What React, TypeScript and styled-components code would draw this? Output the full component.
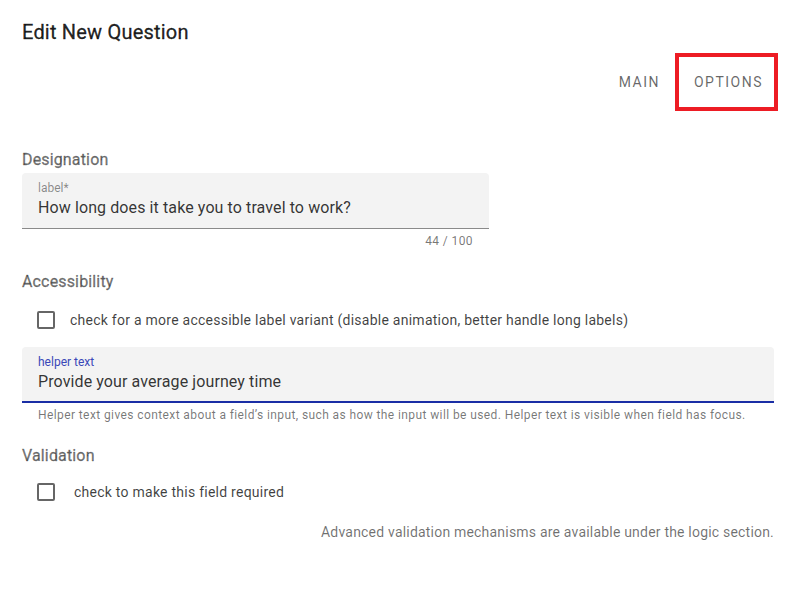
import React from "react";
import styled, { createGlobalStyle } from "styled-components";

const Global = createGlobalStyle`
  html, body { margin: 0; padding: 0; background: #fff; }
  body { font-family: Roboto, "Liberation Sans", Arial, sans-serif; }
  * { box-sizing: border-box; }
`;

const Page = styled.div`
  width: 797px;
  height: 615px;
  padding: 16px 23px 0 22px;
  display: flex;
  flex-direction: column;
`;

const Title = styled.h1`
  margin: 0;
  font-size: 20px;
  font-weight: 400;
  line-height: 32px;
  color: rgba(0, 0, 0, 0.87);
  letter-spacing: 0.2px;
  -webkit-text-stroke: 0.3px rgba(0, 0, 0, 0.87);
`;

const Tabs = styled.div`
  display: flex;
  justify-content: flex-end;
  margin-top: 5px;
  margin-right: -4px;
`;

const Tab = styled.div<{ $outlined?: boolean }>`
  height: 58px;
  padding: 0 11px 0 ${(p) => (p.$outlined ? 15 : 13)}px;
  display: flex;
  align-items: center;
  justify-content: center;
  font-size: 14px;
  font-weight: 400;
  letter-spacing: 1.5px;
  text-transform: uppercase;
  color: rgba(0, 0, 0, 0.6);
  border: 4px solid ${(p) => (p.$outlined ? "#ed1c24" : "transparent")};
`;

const Section = styled.h2<{ $top: number }>`
  margin: ${(p) => p.$top}px 0 1px;
  font-size: 16px;
  font-weight: 400;
  line-height: 24px;
  letter-spacing: 0.15px;
  color: rgba(0, 0, 0, 0.54);
  -webkit-text-stroke: 0.35px rgba(0, 0, 0, 0.54);
`;

const Field = styled.div<{ $width?: string; $focused?: boolean }>`
  width: ${(p) => p.$width || "100%"};
  height: 56px;
  background: #f3f3f3;
  border-radius: 4px 4px 0 0;
  border-bottom: ${(p) => (p.$focused ? "2px solid #1a2ea5" : "1px solid #8a8a8a")};
  padding: 8px 16px 0;
  display: flex;
  flex-direction: column;
`;

const FieldLabel = styled.span<{ $focused?: boolean }>`
  font-size: 12px;
  line-height: 14px;
  color: ${(p) => (p.$focused ? "#3a48b8" : "rgba(0,0,0,0.45)")};
`;

const FieldValue = styled.span`
  margin-top: 1px;
  font-size: 16px;
  line-height: 24px;
  color: rgba(0, 0, 0, 0.8);
  letter-spacing: 0.1px;
`;

const Counter = styled.div`
  width: 467px;
  padding-right: 16px;
  text-align: right;
  font-size: 12px;
  line-height: 20px;
  letter-spacing: 0.4px;
  color: rgba(0, 0, 0, 0.54);
  margin-top: 2px;
`;

const Helper = styled.div`
  padding-left: 16px;
  margin-top: 2px;
  font-size: 12px;
  line-height: 20px;
  letter-spacing: 0.4px;
  color: rgba(0, 0, 0, 0.54);
`;

const CheckRow = styled.label<{ $gap: number; $top: number }>`
  display: flex;
  align-items: center;
  height: 42px;
  margin-top: ${(p) => p.$top}px;
  padding-left: 15px;
  gap: ${(p) => p.$gap}px;
  font-size: 14px;
  letter-spacing: 0.25px;
  color: rgba(0, 0, 0, 0.75);
`;

const Box = styled.span`
  width: 18px;
  height: 18px;
  border: 2px solid rgba(0, 0, 0, 0.6);
  border-radius: 2px;
  flex: none;
`;

const Note = styled.div`
  margin-top: 9px;
  text-align: right;
  font-size: 14px;
  line-height: 20px;
  letter-spacing: 0.2px;
  color: rgba(0, 0, 0, 0.56);
`;

export default function App() {
  return (
    <Page>
      <Global />
      <Title>Edit New Question</Title>
      <Tabs>
        <Tab>Main</Tab>
        <Tab $outlined>Options</Tab>
      </Tabs>

      <Section $top={37}>Designation</Section>
      <Field $width="467px">
        <FieldLabel>label*</FieldLabel>
        <FieldValue>How long does it take you to travel to work?</FieldValue>
      </Field>
      <Counter>44 / 100</Counter>

      <Section $top={19}>Accessibility</Section>
      <CheckRow $gap={15} $top={4}>
        <Box />
        check for a more accessible label variant (disable animation, better handle long labels)
      </CheckRow>
      <Field $focused style={{ marginTop: 6 }}>
        <FieldLabel $focused>helper text</FieldLabel>
        <FieldValue>Provide your average journey time</FieldValue>
      </Field>
      <Helper>
        Helper text gives context about a field’s input, such as how the input will be used. Helper text is visible when field has focus.
      </Helper>

      <Section $top={19}>Validation</Section>
      <CheckRow $gap={19} $top={2}>
        <Box />
        check to make this field required
      </CheckRow>
      <Note>Advanced validation mechanisms are available under the logic section.</Note>
    </Page>
  );
}
